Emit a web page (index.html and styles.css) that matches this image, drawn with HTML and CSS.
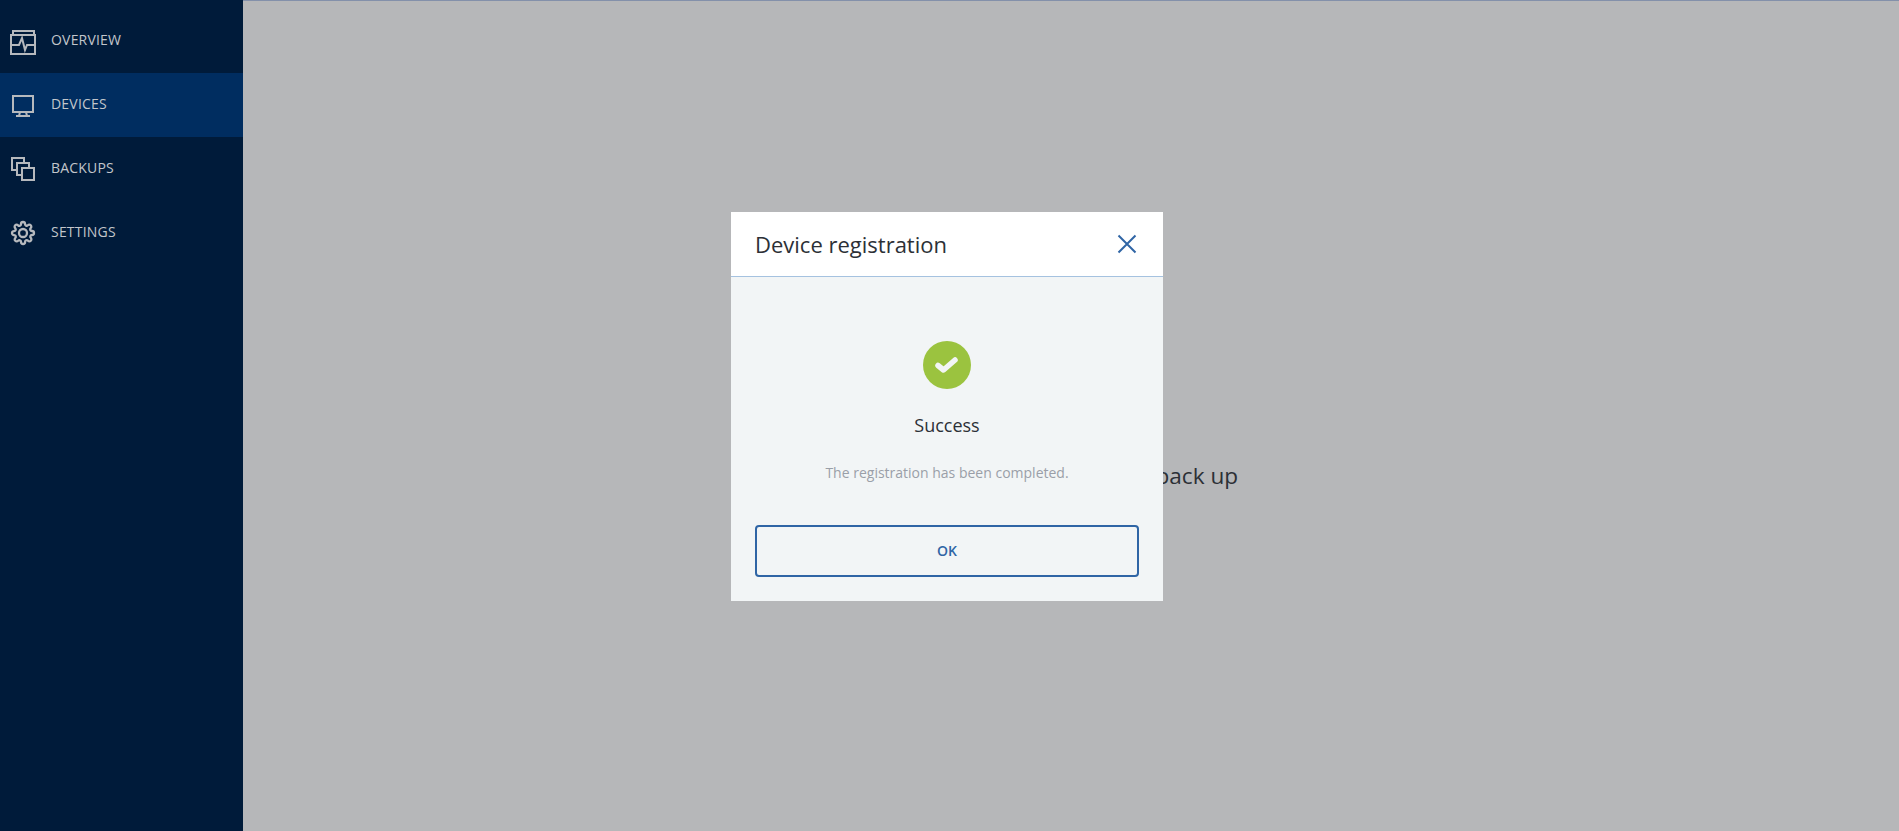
FILE: index.html
```html
<!DOCTYPE html>
<html lang="en">
<head>
    <meta charset="UTF-8">
    <meta name="viewport" content="width=device-width, initial-scale=1.0">
    <title>Devices</title>
    <link rel="stylesheet" href="styles.css">
</head>
<body>
    <div class="layout">
        <nav class="sidebar">
            <a class="nav-item">
                <svg class="nav-icon" viewBox="0 0 32 32">
                    <path d="M6 10V6H27V10"/>
                    <rect x="4" y="10" width="24" height="19"/>
                    <path d="M4 20H12L15 13L18 25L20 20H28"/>
                </svg>
                <span>Overview</span>
            </a>
            <a class="nav-item active">
                <svg class="nav-icon" viewBox="0 0 32 32">
                    <rect x="6" y="7" width="20" height="16"/>
                    <path d="M13 23L12 27M19 23L20 27M9 27H23"/>
                </svg>
                <span>Devices</span>
            </a>
            <a class="nav-item">
                <svg class="nav-icon" viewBox="0 0 32 32">
                    <path d="M10 17H5V5H17V10"/>
                    <path d="M15 22H10V10H22V15"/>
                    <rect x="15" y="15" width="12" height="12"/>
                </svg>
                <span>Backups</span>
            </a>
            <a class="nav-item">
                <svg class="nav-icon gear" viewBox="0 0 32 32">
                    <g transform="translate(4 4)">
                        <circle cx="12" cy="12" r="4"/>
                        <path d="M19.4 15a1.65 1.65 0 0 0 .33 1.82l.06.06a2 2 0 0 1 0 2.83 2 2 0 0 1-2.83 0l-.06-.06a1.65 1.65 0 0 0-1.82-.33 1.65 1.65 0 0 0-1 1.51V21a2 2 0 0 1-2 2 2 2 0 0 1-2-2v-.09A1.65 1.65 0 0 0 9 19.4a1.65 1.65 0 0 0-1.82.33l-.06.06a2 2 0 0 1-2.83 0 2 2 0 0 1 0-2.83l.06-.06a1.65 1.65 0 0 0 .33-1.82 1.65 1.65 0 0 0-1.51-1H3a2 2 0 0 1-2-2 2 2 0 0 1 2-2h.09A1.65 1.65 0 0 0 4.600 9a1.65 1.65 0 0 0-.33-1.82l-.06-.06a2 2 0 0 1 0-2.83 2 2 0 0 1 2.83 0l.06.06a1.65 1.65 0 0 0 1.82.33H9a1.65 1.65 0 0 0 1-1.51V3a2 2 0 0 1 2-2 2 2 0 0 1 2 2v.09a1.65 1.65 0 0 0 1 1.51 1.65 1.65 0 0 0 1.82-.33l.06-.06a2 2 0 0 1 2.83 0 2 2 0 0 1 0 2.83l-.06.06a1.65 1.65 0 0 0-.33 1.82V9a1.65 1.65 0 0 0 1.51 1H21a2 2 0 0 1 2 2 2 2 0 0 1-2 2h-.09a1.65 1.65 0 0 0-1.51 1z"/>
                    </g>
                </svg>
                <span>Settings</span>
            </a>
        </nav>
        <main class="content">
            <p class="empty-text">There are no devices to back up</p>
        </main>
    </div>

    <div class="dialog">
        <div class="dialog-header">
            <h2 class="dialog-title">Device registration</h2>
            <svg class="dialog-close" viewBox="0 0 20 20">
                <path d="M1.500 1.500L18.500 18.500M18.500 1.500L1.500 18.500"/>
            </svg>
        </div>
        <div class="dialog-body">
            <svg class="success-icon" viewBox="0 0 48 48">
                <circle cx="24" cy="24" r="24"/>
                <path d="M15 24.500L20.500 29L32 19"/>
            </svg>
            <div class="success-title">Success</div>
            <p class="success-text">The registration has been completed.</p>
            <button class="ok-btn">OK</button>
        </div>
    </div>
</body>
</html>
```

FILE: styles.css
```css
html, body {
    height: 100%;
}

body {
    margin: 0;
    font-family: "Open Sans", "Noto Sans", sans-serif;
    background: #b6b7b9;
    color: #2c3036;
    overflow: hidden;
}

.layout {
    display: flex;
    height: 100%;
}

.sidebar {
    width: 243px;
    flex-shrink: 0;
    padding-top: 9px;
    box-sizing: border-box;
    background: #001b3a;
}

.nav-item {
    display: flex;
    align-items: center;
    gap: 12px;
    height: 64px;
    padding-left: 7px;
    font-size: 14px;
    letter-spacing: 0.2px;
    text-transform: uppercase;
    color: #c2c6cb;
}

.nav-item span {
    margin-bottom: 4px;
}

.nav-item.active {
    background: #002d60;
}

.nav-icon {
    width: 32px;
    height: 32px;
    flex-shrink: 0;
    fill: none;
    stroke: #b6b9bd;
    stroke-width: 2;
}

.nav-icon.gear {
    stroke-width: 2.300;
}

.content {
    flex: 1;
    display: flex;
    align-items: center;
    justify-content: center;
    border-top: 1px solid #8390aa;
    padding-top: 119px;
}

.empty-text {
    margin: 0;
    font-size: 22.600px;
    line-height: 30px;
}

.dialog {
    position: absolute;
    left: 731px;
    top: 212px;
    width: 432px;
    background: #f2f5f6;
}

.dialog-header {
    display: flex;
    align-items: center;
    justify-content: space-between;
    height: 64px;
    padding: 0 26px 0 24px;
    background: #ffffff;
    border-bottom: 1px solid #a5c2e0;
}

.dialog-title {
    margin: 0;
    font-size: 22px;
    font-weight: 400;
}

.dialog-close {
    width: 20px;
    height: 20px;
    fill: none;
    stroke: #2f65a5;
    stroke-width: 2;
}

.dialog-body {
    display: flex;
    flex-direction: column;
    align-items: center;
    padding: 64px 24px 24px;
}

.success-icon {
    width: 48px;
    height: 48px;
    margin-bottom: 24px;
}

.success-icon circle {
    fill: #9bc33f;
}

.success-icon path {
    fill: none;
    stroke: #f2f5f6;
    stroke-width: 5.500;
    stroke-linecap: round;
    stroke-linejoin: round;
}

.success-title {
    font-size: 18px;
    line-height: 24px;
}

.success-text {
    margin: 26px 0 42px;
    font-size: 14px;
    line-height: 20px;
    color: #9a9fa8;
}

.ok-btn {
    width: 100%;
    height: 52px;
    padding: 0 0 2px;
    background: transparent;
    border: 2px solid #2f65a5;
    border-radius: 4px;
    font-family: inherit;
    font-size: 14px;
    font-weight: 600;
    color: #2f65a5;
}
```
